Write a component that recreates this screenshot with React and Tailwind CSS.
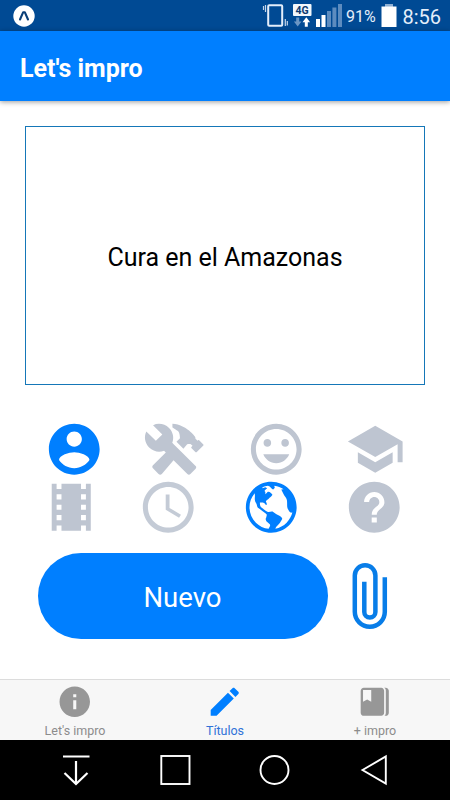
import React, { useState } from 'react';
import {
  IoMdContact,
  IoMdConstruct,
  IoMdHappy,
  IoMdSchool,
  IoMdFilm,
  IoMdTime,
  IoMdGlobe,
  IoMdHelpCircle,
  IoMdInformationCircle,
  IoMdCreate,
  IoMdBookmarks,
} from 'react-icons/io';

const topRow = [
  { id: 'person', Icon: IoMdContact, margin: 'ml-[42.5px]' },
  { id: 'job', Icon: IoMdConstruct, margin: 'ml-[38px]' },
  { id: 'emotion', Icon: IoMdHappy, margin: 'ml-[39px]' },
  { id: 'study', Icon: IoMdSchool, margin: 'ml-[36.5px]' },
];

const bottomRow = [
  { id: 'film', Icon: IoMdFilm, margin: 'ml-[39.5px]' },
  { id: 'time', Icon: IoMdTime, margin: 'ml-[34.5px]' },
  { id: 'place', Icon: IoMdGlobe, margin: 'ml-[40.5px]' },
  { id: 'random', Icon: IoMdHelpCircle, margin: 'ml-[40.5px]' },
];

const tabs = [
  { label: "Let's impro", Icon: IoMdInformationCircle },
  { label: 'Títulos', Icon: IoMdCreate },
  { label: '+ impro', Icon: IoMdBookmarks },
];

const StatusBar = () => (
  <div className="h-[31px] shrink-0 bg-[#004a94] flex items-center text-[#e4eefa]">
    <svg className="ml-[13px] shrink-0" width="22" height="22" viewBox="0 0 22 22">
      <circle cx="11" cy="11" r="10.7" fill="#fff" />
      <path d="M7 14.5 L10.2 7.2 H11.8 L15 14.5" fill="none" stroke="#0b3f78" strokeWidth="2.1" strokeLinejoin="round" strokeLinecap="round" />
    </svg>
    {/* vibrate, network and signal */}
    <svg className="ml-[227px] shrink-0" width="81" height="31" viewBox="262 0 81 31">
      <rect x="268.2" y="5.2" width="14" height="20.6" rx="1" fill="none" stroke="#e4eefa" strokeWidth="2" />
      <path d="M263.5 6v4M265.5 5v7M285.3 19v7M287.3 21v4.5" stroke="#c5d6ea" strokeWidth="1.2" />
      <rect x="293" y="4" width="18.5" height="12" rx="1" fill="#f2f7fc" />
      <text x="302.2" y="13.7" textAnchor="middle" fontFamily="Roboto, sans-serif" fontWeight="700" fontSize="10.5" fill="#0b3a70">4G</text>
      <path d="M296.2 17.5h3v4h2.3l-3.8 5-3.8-5h2.3z" fill="#6b96c4" />
      <path d="M304.8 26.7h3v-4.5h2.3l-3.8-5-3.8 5h2.3z" fill="#fff" />
      <path d="M316 19h4v8h-4zM321.5 15h4v12h-4z" fill="#fff" />
      <path d="M327 11h4v16h-4zM332.4 7.5h4v19.5h-4zM338 4h4v23h-4z" fill="#5d8cbf" />
    </svg>
    <span className="ml-[3px] mt-[3px] w-[35px] text-[16px] leading-none whitespace-nowrap">91%</span>
    <svg className="shrink-0" width="16" height="31" viewBox="0 0 16 31">
      <path d="M4 4h8v3H4z" fill="#8fb0d4" />
      <rect x="0.5" y="6.5" width="15" height="20.5" fill="#fff" />
    </svg>
    <span className="ml-[5.5px] mt-[2px] text-[20px] leading-none whitespace-nowrap">8:56</span>
  </div>
);

const IconRow = ({ items, active, onToggle }) => (
  <div className="flex">
    {items.map(({ id, Icon, margin }) => (
      <button key={id} onClick={() => onToggle(id)} className={`shrink-0 ${margin} ${active.includes(id) ? 'text-[#007fff]' : 'text-[#bec5d1]'}`}>
        <Icon className="size-[62.5px]" />
      </button>
    ))}
  </div>
);

const Clip = () => (
  <svg width="38" height="68" viewBox="0 0 38 68" fill="none" stroke="currentColor" strokeWidth="4.5">
    <path d="M33.800 15.300v34.500a15 15 0 0 1-30 0V13.500a10.300 10.300 0 0 1 20.600 0v36.400a5.550 5.550 0 0 1-11.100 0V19.700" />
  </svg>
);

const NavBar = () => (
  <div className="h-[60px] shrink-0 bg-black">
    <svg width="450" height="60" viewBox="0 740 450 60" fill="none" stroke="#fff" strokeWidth="2.2">
      <path d="M63 756.5h26.5M76 761v23M64.5 773l11.5 11 11.5-11" />
      <rect x="161.3" y="756" width="28.2" height="28" strokeWidth="1.9" />
      <circle cx="274.5" cy="770" r="14" strokeWidth="1.9" />
      <path d="M362.5 770l23.3-13.5v27z" strokeWidth="1.9" />
    </svg>
  </div>
);

const App = () => {
  const [active, setActive] = useState(['person', 'place']);
  const [tab, setTab] = useState(1);

  const toggle = (id) => {
    setActive(a => (a.includes(id) ? a.filter(x => x !== id) : [...a, id]));
  };

  return (
    <div className="w-[450px] h-[800px] flex flex-col overflow-hidden bg-white font-[Roboto,sans-serif]">
      <StatusBar />
      <header className="h-[70px] shrink-0 bg-[#007fff] flex items-center pl-5 pt-1 shadow-[0_1px_5px_rgba(0,0,0,0.4)]">
        <h1 className="text-white text-[25px] leading-none font-bold">Let's impro</h1>
      </header>

      <main className="flex-1 flex flex-col min-h-0">
        <div className="mt-[25px] mx-[25px] h-[259px] shrink-0 border border-[#1577b8] flex items-center justify-center">
          <p className="text-[25px] leading-none text-black mt-[3px]">Cura en el Amazonas</p>
        </div>

        <div className="mt-[32.5px] h-[120.5px] shrink-0 flex flex-col">
          <IconRow items={topRow} active={active} onToggle={toggle} />
          <div className="-mt-[4.5px]">
            <IconRow items={bottomRow} active={active} onToggle={toggle} />
          </div>
        </div>

        <div className="mt-[15px] ml-[37.5px] flex items-center">
          <button className="w-[290px] h-[86px] rounded-full bg-[#007fff] text-white text-[27.5px] leading-none pt-[3px]">Nuevo</button>
          <button className="ml-[23.5px] text-[#087de8]">
            <Clip />
          </button>
        </div>
      </main>

      <nav className="h-[61px] shrink-0 bg-[#f7f7f7] border-t border-[#dcdcdc] grid grid-cols-3">
        {tabs.map(({ label, Icon }, i) => (
          <button key={label} onClick={() => setTab(i)} className={`flex flex-col items-center pt-[3px] ${tab === i ? 'text-[#007fff]' : 'text-[#979797]'}`}>
            <Icon className="size-[37.5px] shrink-0" />
            <span className={`mt-[4px] text-[12.5px] leading-none ${tab === i ? 'text-[#2f72d8]' : 'text-[#8c8c8c]'}`}>{label}</span>
          </button>
        ))}
      </nav>
      <NavBar />
    </div>
  );
};

export default App;
